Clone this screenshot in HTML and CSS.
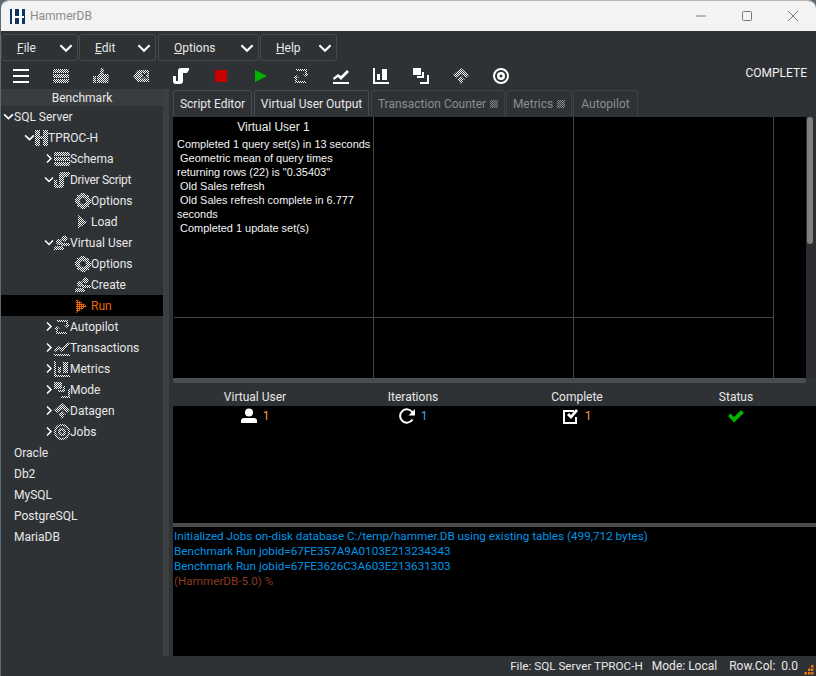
FILE: index.html
```html
<!DOCTYPE html>
<html lang="en">
<head>
<meta charset="utf-8">
<title>HammerDB</title>
<link rel="stylesheet" href="styles.css">
</head>
<body>
<svg class="defs" width="0" height="0" aria-hidden="true">
  <defs>
    <pattern id="dith" width="2" height="2" patternUnits="userSpaceOnUse">
      <rect width="1" height="1" fill="#fff"/><rect x="1" y="1" width="1" height="1" fill="#fff"/>
    </pattern>
    <pattern id="stripe" width="2" height="2" patternUnits="userSpaceOnUse">
      <rect width="1" height="2" fill="#e8660a"/><rect x="1" width="1" height="1" fill="#e8660a"/>
    </pattern>
    <symbol id="i-schema" viewBox="0 0 16 16"><path d="M2 1h12a2 2 0 0 1 2 2v2H0V3a2 2 0 0 1 2-2zM0 6h16v4H0zM0 11h16v2a2 2 0 0 1-2 2H2a2 2 0 0 1-2-2z"/></symbol>
    <symbol id="i-thumb" viewBox="0 0 16 16"><path d="M0 8h3v7H0zM4 8l3-3 1-5h2l1 2-1 4h5l1 2-1 7H4z"/></symbol>
    <symbol id="i-tag" viewBox="0 0 16 16"><path fill-rule="evenodd" d="M5 2h11v12H5L0 8zM8 5l2.500 3L8 11h2l1.500-2 1.500 2h2l-2.500-3L15 5h-2l-1.500 2L10 5z"/></symbol>
    <symbol id="i-script" viewBox="0 0 16 16"><path d="M5 3a3 3 0 0 1 3-3h8v2l-2 3h-4v8a3 3 0 0 1-3 3H3a3 3 0 0 1-3-3V8h3v5h2z"/></symbol>
    <symbol id="i-h" viewBox="0 0 13 16"><path d="M0 0h5v6h3V0h5v16H8v-7H5v7H0z"/></symbol>
    <symbol id="i-gear" viewBox="0 0 16 16"><path fill-rule="evenodd" d="M6 0h4l1 2 3 0 0 3 2 1v4l-2 1 0 3-3 0-1 2H6l-1-2-3 0 0-3-2-1V6l2-1 0-3 3 0zM8 5a3 3 0 1 0 0 6 3 3 0 0 0 0-6z"/></symbol>
    <symbol id="i-play" viewBox="0 0 16 16"><path d="M3 1l9 7-9 7z"/></symbol>
    <symbol id="i-run" viewBox="0 0 16 16"><path d="M1 1l11 7-11 7z"/></symbol>
    <symbol id="i-users" viewBox="0 0 16 16"><circle cx="10.500" cy="3.500" r="3"/><path d="M7 8h7a2 2 0 0 1 2 2v1H7z"/><circle cx="5" cy="7" r="3"/><path d="M0 15v-1a3 3 0 0 1 3-3h4a3 3 0 0 1 3 3v1z"/></symbol>
    <symbol id="i-auto" viewBox="0 0 16 16"><path d="M3 1h10a1 1 0 0 1 1 1v4h2l-3 3-3-3h2V3H3zM13 15H3a1 1 0 0 1-1-1v-4H0l3-3 3 3H4v3h9z"/></symbol>
    <symbol id="i-chart" viewBox="0 0 16 16"><path d="M0 10l5-4 3 2 6-6 2 2-8 8-3-3-4 3zM0 14h16v2H0z"/></symbol>
    <symbol id="i-bars" viewBox="0 0 16 16"><path d="M0 0h2v14h14v2H0zM4 6h3v6H4zM9 1h5v11H9z"/></symbol>
    <symbol id="i-mode" viewBox="0 0 16 16"><path d="M0 0h8v7H0zM9 4h2v6H4V8h5zM14 7h2v9H7v-2h7z"/></symbol>
    <symbol id="i-data" viewBox="0 0 16 16"><path d="M8 0l8 7-3 3-5-4-5 4-3-3zM8 8l4 4-2 0 0 1-2 3-2-3 0-1-2 0z"/></symbol>
    <symbol id="i-target" viewBox="0 0 16 16"><path fill-rule="evenodd" d="M8 0a8 8 0 1 1 0 16A8 8 0 0 1 8 0zM8 2a6 6 0 1 0 0 12A6 6 0 0 0 8 2zM8 4a4 4 0 1 1 0 8 4 4 0 0 1 0-8zM8 6.500a1.500 1.500 0 1 0 0 3 1.500 1.500 0 0 0 0-3z"/></symbol>
    <symbol id="chev-d" viewBox="0 0 10 10"><path d="M1 3l4 4 4-4" fill="none" stroke="#fff" stroke-width="1.500"/></symbol>
    <symbol id="chev-r" viewBox="0 0 10 10"><path d="M3 1l4 4-4 4" fill="none" stroke="#fff" stroke-width="1.500"/></symbol>
  </defs>
</svg>
<div class="win">
  <header class="title">
    <svg class="logo" viewBox="0 0 15 15"><rect width="15" height="15" fill="#0b3565"/><path d="M2 0h3v7h4V0h3v7h2v2h-2v6H9V9H5v6H2z" fill="#fff"/></svg>
    <span class="title-text">HammerDB</span>
    <div class="controls">
      <svg class="ctl" viewBox="0 0 46 12"><path d="M18 6h10" stroke="#777" fill="none"/></svg>
      <svg class="ctl" viewBox="0 0 46 12"><rect x="18.500" y="1.500" width="9" height="9" rx="1" stroke="#777" fill="none"/></svg>
      <svg class="ctl" viewBox="0 0 46 12"><path d="M18 1l10 10M28 1L18 11" stroke="#777" fill="none"/></svg>
    </div>
  </header>

  <nav class="menu">
    <div class="mbtn m-file"><span><u>F</u>ile</span><svg class="mchev"><use href="#chev-d"/></svg></div>
    <div class="mbtn m-edit"><span><u>E</u>dit</span><svg class="mchev"><use href="#chev-d"/></svg></div>
    <div class="mbtn m-opt"><span><u>O</u>ptions</span><svg class="mchev"><use href="#chev-d"/></svg></div>
    <div class="mbtn m-help"><span><u>H</u>elp</span><svg class="mchev"><use href="#chev-d"/></svg></div>
  </nav>

  <div class="toolbar">
    <span class="tool"><svg class="ti" viewBox="0 0 16 16"><path d="M0 1h16v2H0zM0 7h16v2H0zM0 13h16v2H0z" fill="#fff"/></svg></span>
    <span class="tool"><svg class="ti"><use href="#i-schema" fill="url(#dith)"/></svg></span>
    <span class="tool"><svg class="ti"><use href="#i-thumb" fill="url(#dith)"/></svg></span>
    <span class="tool"><svg class="ti"><use href="#i-tag" fill="url(#dith)"/></svg></span>
    <span class="tool"><svg class="ti"><use href="#i-script" fill="#fff"/></svg></span>
    <span class="tool"><svg class="ti" viewBox="0 0 16 16"><rect x="2" y="2" width="12" height="12" fill="#c80000"/></svg></span>
    <span class="tool"><svg class="ti" viewBox="0 0 16 16"><path d="M2 2l12 6-12 6z" fill="#00b400"/></svg></span>
    <span class="tool"><svg class="ti"><use href="#i-auto" fill="url(#dith)"/></svg></span>
    <span class="tool"><svg class="ti"><use href="#i-chart" fill="#fff"/></svg></span>
    <span class="tool"><svg class="ti"><use href="#i-bars" fill="#fff"/></svg></span>
    <span class="tool"><svg class="ti"><use href="#i-mode" fill="#fff"/></svg></span>
    <span class="tool"><svg class="ti"><use href="#i-data" fill="url(#dith)"/></svg></span>
    <span class="tool"><svg class="ti"><use href="#i-target" fill="#fff"/></svg></span>
    <span class="state">COMPLETE</span>
  </div>

  <div class="work">
    <aside class="side">
      <div class="side-head">Benchmark</div>
      <div class="row l0"><svg class="chev"><use href="#chev-d"/></svg><span>SQL Server</span></div>
      <div class="row l1"><svg class="chev"><use href="#chev-d"/></svg><svg class="ico ico-h"><use href="#i-h" fill="url(#dith)"/></svg><span>TPROC-H</span></div>
      <div class="row l2"><svg class="chev"><use href="#chev-r"/></svg><svg class="ico"><use href="#i-schema" fill="url(#dith)"/></svg><span>Schema</span></div>
      <div class="row l2"><svg class="chev"><use href="#chev-d"/></svg><svg class="ico"><use href="#i-script" fill="url(#dith)"/></svg><span class="tight">Driver Script</span></div>
      <div class="row l3"><svg class="ico"><use href="#i-gear" fill="url(#dith)"/></svg><span>Options</span></div>
      <div class="row l3"><svg class="ico"><use href="#i-play" fill="url(#dith)"/></svg><span>Load</span></div>
      <div class="row l2"><svg class="chev"><use href="#chev-d"/></svg><svg class="ico"><use href="#i-users" fill="url(#dith)"/></svg><span>Virtual User</span></div>
      <div class="row l3"><svg class="ico"><use href="#i-gear" fill="url(#dith)"/></svg><span>Options</span></div>
      <div class="row l3"><svg class="ico"><use href="#i-users" fill="url(#dith)"/></svg><span>Create</span></div>
      <div class="row l3 sel"><svg class="ico"><use href="#i-run" fill="url(#stripe)"/></svg><span>Run</span></div>
      <div class="row l2"><svg class="chev"><use href="#chev-r"/></svg><svg class="ico"><use href="#i-auto" fill="url(#dith)"/></svg><span>Autopilot</span></div>
      <div class="row l2"><svg class="chev"><use href="#chev-r"/></svg><svg class="ico"><use href="#i-chart" fill="url(#dith)"/></svg><span>Transactions</span></div>
      <div class="row l2"><svg class="chev"><use href="#chev-r"/></svg><svg class="ico"><use href="#i-bars" fill="url(#dith)"/></svg><span>Metrics</span></div>
      <div class="row l2"><svg class="chev"><use href="#chev-r"/></svg><svg class="ico"><use href="#i-mode" fill="url(#dith)"/></svg><span>Mode</span></div>
      <div class="row l2"><svg class="chev"><use href="#chev-r"/></svg><svg class="ico"><use href="#i-data" fill="url(#dith)"/></svg><span>Datagen</span></div>
      <div class="row l2"><svg class="chev"><use href="#chev-r"/></svg><svg class="ico"><use href="#i-target" fill="url(#dith)"/></svg><span>Jobs</span></div>
      <div class="row l0 plain"><span>Oracle</span></div>
      <div class="row l0 plain"><span>Db2</span></div>
      <div class="row l0 plain"><span>MySQL</span></div>
      <div class="row l0 plain"><span>PostgreSQL</span></div>
      <div class="row l0 plain"><span>MariaDB</span></div>
    </aside>
    <div class="gutter"></div>

    <main class="main">
      <div class="tabs">
        <div class="tab active t1">Script Editor</div>
        <div class="tab active t2">Virtual User Output</div>
        <div class="tab t3">Transaction Counter <i class="dots"></i></div>
        <div class="tab t4">Metrics <i class="dots"></i></div>
        <div class="tab t5">Autopilot</div>
      </div>

      <div class="output">
        <div class="cells">
          <div class="cell">
            <div class="vu-head">Virtual User 1</div>
            <div class="vu-text">Completed 1 query set(s) in 13 seconds
 Geometric mean of query times returning rows (22) is "0.35403"
 Old Sales refresh
 Old Sales refresh complete in 6.777 seconds
 Completed 1 update set(s)</div>
          </div>
          <div class="cell"></div>
          <div class="cell"></div>
          <div class="cell"></div>
          <div class="cell"></div>
          <div class="cell"></div>
        </div>
        <div class="vscroll"><div class="thumb"></div></div>
      </div>
      <div class="hscroll"></div>

      <div class="thead">
        <span>Virtual User</span><span>Iterations</span><span>Complete</span><span>Status</span>
      </div>
      <div class="tbody">
        <div class="tcell">
          <svg class="si" viewBox="0 0 16 16"><circle cx="8" cy="4.500" r="4" fill="#fff"/><path d="M0 15v-2a3 3 0 0 1 3-3h10a3 3 0 0 1 3 3v2z" fill="#fff"/></svg><b class="or">1</b>
        </div>
        <div class="tcell">
          <svg class="si" viewBox="0 0 16 16"><path d="M13.500 11.500A6.700 6.700 0 1 1 13.500 4.500" fill="none" stroke="#fff" stroke-width="2"/><path d="M16 1v6.500H9.500z" fill="#fff"/></svg><b class="bl">1</b>
        </div>
        <div class="tcell">
          <svg class="si" viewBox="0 0 16 16"><path d="M0 2h11v2H2v10h10V9h2v7H0z" fill="#fff"/><path d="M4 7l2-2 2 2 5-6 2 2-7 8z" fill="#fff"/></svg><b class="or">1</b>
        </div>
        <div class="tcell">
          <svg class="si" viewBox="0 0 16 16"><path d="M0 8l2.500-2.500L6 9l7-7 3 3-10 9.500z" fill="#00b400"/></svg>
        </div>
      </div>
      <div class="split"></div>
      <div class="log">
        <div>Initialized Jobs on-disk database C:/temp/hammer.DB using existing tables (499,712 bytes)</div>
        <div>Benchmark Run jobid=67FE357A9A0103E213234343</div>
        <div>Benchmark Run jobid=67FE3626C3A603E213631303</div>
        <div class="prompt">(HammerDB-5.0) %</div>
      </div>
    </main>
  </div>

  <footer class="status">
    <span class="s1">File: SQL Server TPROC-H</span>
    <span class="s2">Mode: Local</span>
    <span class="s3">Row.Col:</span>
    <span class="s4">0.0</span>
    <svg class="grip" viewBox="0 0 10 10"><g fill="#e8760a"><rect x="7" y="0" width="2.500" height="2.500"/><rect x="4" y="3.500" width="2.500" height="2.500"/><rect x="7" y="3.500" width="2.500" height="2.500"/><rect x="0.500" y="7" width="2.500" height="2.500"/><rect x="4" y="7" width="2.500" height="2.500"/><rect x="7" y="7" width="2.500" height="2.500"/></g></svg>
  </footer>
</div>
</body>
</html>
```
FILE: styles.css
```css
* { box-sizing: border-box; }
html, body { margin: 0; padding: 0; }
body { width: 816px; height: 676px; overflow: hidden; background: #5a6b78; font-family: Roboto, "Noto Sans", sans-serif; font-size: 12px; color: #e8e8e8; }
.defs { display: block; }
.win { width: 815px; height: 676px; margin-left: 1px; display: flex; flex-direction: column; background: #2f3235; border-top: 1px solid #b8b8b8; border-top-left-radius: 8px; border-top-right-radius: 8px; overflow: hidden; }

.title { height: 30px; flex: none; background: #f3f3f3; display: flex; align-items: center; padding-left: 9px; }
.logo { width: 15px; height: 15px; flex: none; }
.title-text { margin-left: 5px; color: #8c8c8c; font-size: 12px; }
.controls { margin-left: auto; display: flex; }
.ctl { width: 46px; height: 12px; flex: none; }

.menu { height: 31px; flex: none; display: flex; padding: 3px 0 0 0; gap: 1px; }
.mbtn { height: 27px; border: 1px solid #46494d; border-radius: 3px; display: flex; align-items: center; justify-content: space-between; padding: 0 4px 0 15px; color: #e8e8e8; }
.m-file { width: 77px; }
.m-edit { width: 77px; }
.m-opt { width: 101px; margin-left: 1px; }
.m-help { width: 77px; }
.mchev { width: 14px; height: 14px; }

.toolbar { height: 27px; flex: none; display: flex; align-items: flex-start; padding-top: 6px; }
.tool { width: 40px; height: 16px; flex: none; display: flex; justify-content: center; }
.ti { width: 16px; height: 16px; display: block; }
.state { margin-left: auto; padding-right: 9px; margin-top: -2px; color: #f0f0f0; }

.work { flex: 1; display: flex; min-height: 0; }
.side { width: 162px; flex: none; }
.side-head { height: 17px; background: #3a3d40; text-align: center; line-height: 19px; }
.gutter { width: 6px; flex: none; background: #3c3f42; }
.row { height: 21px; display: flex; align-items: center; color: #e8e8e8; white-space: nowrap; }
.l0 { padding-left: 2px; }
.l1 { padding-left: 23px; }
.l2 { padding-left: 43px; }
.l3 { padding-left: 74px; }
.chev { width: 11px; height: 11px; flex: none; }
.l2 .chev { width: 10px; }
.ico { width: 16px; height: 16px; flex: none; }
.ico-h { width: 13px; }
.tight { letter-spacing: -0.3px; }
.plain span { padding-left: 11px; }
.sel { background: #000; color: #e8660a; }

.main { flex: 1; min-width: 0; margin-left: 4px; padding-top: 1px; display: flex; flex-direction: column; }
.tabs { height: 27px; flex: none; display: flex; align-items: flex-start; gap: 2px; }
.tab { height: 26px; border: 1px solid #3e4145; border-bottom: 0; border-radius: 3px 3px 0 0; line-height: 27px; text-align: center; color: #8a8d90; white-space: nowrap; }
.tab.active { color: #e8e8e8; border-color: #484b4f; }
.t1 { width: 79px; }
.t2 { width: 115px; }
.t3 { width: 134px; }
.t4 { width: 66px; margin-left: -1px; }
.t5 { width: 65px; margin-left: -1px; }
.dots { display: inline-block; width: 8px; height: 8px; margin-left: 1px; background: repeating-conic-gradient(#8a8d90 0 25%, #2f3235 0 50%) 0 0 / 2px 2px; }

.output { height: 261px; flex: none; display: flex; background: #000; }
.cells { width: 633px; flex: none; padding-left: 1px; display: grid; grid-template-columns: repeat(3, 200px); grid-template-rows: 201px 60px; overflow: hidden; }
.cell { border-right: 1px solid #444; border-bottom: 1px solid #444; }
.cell:nth-child(n+4) { border-bottom: 0; }
.vu-head { font: 12px/20px "Liberation Sans", Arial, sans-serif; text-align: center; color: #f0f0f0; }
.vu-text { font: 10.95px/14px "Liberation Sans", Arial, sans-serif; color: #f4f4f4; white-space: pre-wrap; padding: 0 2px 0 3px; }
.vscroll { flex: 1; background: #2b2d30; }
.thumb { width: 6px; height: 127px; background: #808080; border-radius: 3px; margin-left: 1px; }
.hscroll { height: 5px; width: 633px; flex: none; background: #4a4d50; border-radius: 2px; }

.thead { height: 23px; flex: none; display: grid; grid-template-columns: 160px 156px 172px 146px; padding-left: 2px; align-items: end; text-align: center; line-height: 18px; }
.tbody { height: 117px; flex: none; background: #000; display: grid; grid-template-columns: 160px 156px 172px 146px; grid-template-rows: 20px; padding-left: 2px; }
.tcell { display: flex; align-items: center; justify-content: center; gap: 6px; }
.si { width: 16px; height: 16px; flex: none; }
.tcell b { font-weight: 400; }
.or { color: #f0a040; }
.bl { color: #4aa6e8; }
.split { height: 4px; flex: none; background: #4a4d50; }
.log { height: 129px; flex: none; background: #000; color: #0096e6; font-size: 11.7px; line-height: 15px; padding: 2px 0 0 1px; white-space: nowrap; }
.prompt { color: #8a3a22; }

.status { height: 20px; flex: none; display: flex; align-items: center; justify-content: flex-end; color: #e8e8e8; }
.s1 { margin-right: 9px; font-size: 11.7px; }
.s2 { margin-right: 12px; }
.s3 { margin-right: 6px; }
.s4 { margin-right: 6px; }
.grip { width: 10px; height: 10px; align-self: flex-end; flex: none; margin: 0 2px 1px 0; }
```
